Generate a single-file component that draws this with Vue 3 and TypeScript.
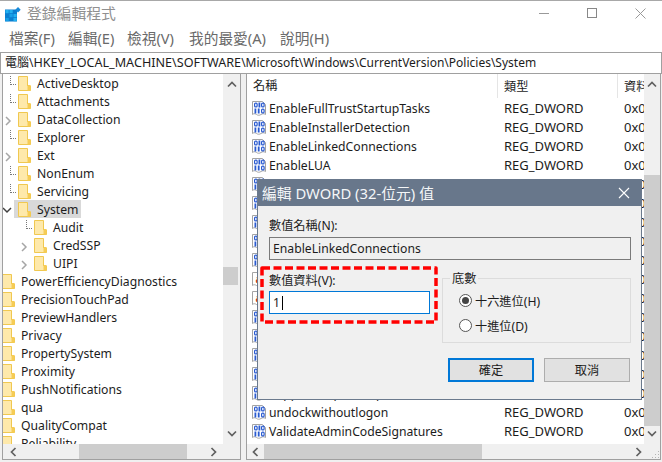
<script setup lang="ts">
interface TreeRow { name: string; depth: number; mark: 'line' | 'closed' | 'open' | 'none'; selected?: boolean }

const treeRows: TreeRow[] = [
  { name: 'ActiveDesktop', depth: 1, mark: 'line' },
  { name: 'Attachments', depth: 1, mark: 'line' },
  { name: 'DataCollection', depth: 1, mark: 'closed' },
  { name: 'Explorer', depth: 1, mark: 'line' },
  { name: 'Ext', depth: 1, mark: 'closed' },
  { name: 'NonEnum', depth: 1, mark: 'line' },
  { name: 'Servicing', depth: 1, mark: 'line' },
  { name: 'System', depth: 1, mark: 'open', selected: true },
  { name: 'Audit', depth: 2, mark: 'line' },
  { name: 'CredSSP', depth: 2, mark: 'closed' },
  { name: 'UIPI', depth: 2, mark: 'closed' },
  { name: 'PowerEfficiencyDiagnostics', depth: 0, mark: 'none' },
  { name: 'PrecisionTouchPad', depth: 0, mark: 'none' },
  { name: 'PreviewHandlers', depth: 0, mark: 'none' },
  { name: 'Privacy', depth: 0, mark: 'none' },
  { name: 'PropertySystem', depth: 0, mark: 'none' },
  { name: 'Proximity', depth: 0, mark: 'none' },
  { name: 'PushNotifications', depth: 0, mark: 'none' },
  { name: 'qua', depth: 0, mark: 'none' },
  { name: 'QualityCompat', depth: 0, mark: 'none' },
  { name: 'Reliability', depth: 0, mark: 'none' },
]

interface ListRow { name: string; text?: boolean }
const listRows: ListRow[] = [
  { name: 'EnableFullTrustStartupTasks' },
  { name: 'EnableInstallerDetection' },
  { name: 'EnableLinkedConnections' },
  { name: 'EnableLUA' },
  { name: 'EnableSecureUIAPaths' },
  { name: 'EnableUIADesktopToggle' },
  { name: 'EnableUwpStartupTasks' },
  { name: 'EnableVirtualization' },
  { name: 'FilterAdministratorToken' },
  { name: 'legalnoticecaption', text: true },
  { name: 'legalnoticetext', text: true },
  { name: 'PromptOnSecureDesktop' },
  { name: 'scforceoption' },
  { name: 'shutdownwithoutlogon' },
  { name: 'SupportFullTrustStartupTasks' },
  { name: 'SupportUwpStartupTasks' },
  { name: 'undockwithoutlogon' },
  { name: 'ValidateAdminCodeSignatures' },
]
</script>

<template>
  <div class="window">
    <header class="titlebar">
      <svg class="app-icon" width="16" height="15" viewBox="0 0 16 15">
        <rect x="0" y="2.500" width="12" height="12" fill="#0a7fd0" />
        <rect x="0.500" y="3" width="3.200" height="3.200" fill="#22b0f0" />
        <rect x="4.500" y="3" width="3.200" height="3.200" fill="#22b0f0" />
        <rect x="8.500" y="7" width="3.200" height="3.200" fill="#22b0f0" />
        <rect x="4.500" y="7" width="3.200" height="3.200" fill="#16a0e8" />
        <rect x="0.500" y="11" width="3.200" height="3.200" fill="#16a0e8" />
        <rect x="8.500" y="11" width="3.200" height="3.200" fill="#22b0f0" />
        <path d="M13 0l2.700 2.700L13 5.400l-2.700-2.700z" fill="#1689d8" />
      </svg>
      <span class="title">登錄編輯程式</span>
      <div class="win-controls">
        <svg width="11" height="11" viewBox="0 0 11 11"><path d="M0 5.500h10" stroke="#999" fill="none" /></svg>
        <svg width="11" height="11" viewBox="0 0 11 11"><rect x="0.500" y="0.500" width="9" height="9" stroke="#888" fill="none" /></svg>
        <svg width="11" height="11" viewBox="0 0 11 11"><path d="M.5.500l10 10M10.500.500l-10 10" stroke="#999" fill="none" /></svg>
      </div>
    </header>

    <nav class="menubar">
      <span class="m1">檔案(F)</span>
      <span class="m2">編輯(E)</span>
      <span class="m3">檢視(V)</span>
      <span class="m4">我的最愛(A)</span>
      <span>說明(H)</span>
    </nav>

    <div class="address">電腦\<span class="caps">HKEY_LOCAL_MACHINE\SOFTWARE</span>\Microsoft\Windows\CurrentVersion\Policies\System</div>

    <main class="panes">
      <section class="pane tree-pane">
        <div class="pane-body">
          <div class="pane-content tree">
            <div v-for="row in treeRows" :key="row.name" class="tree-row" :class="'depth-' + row.depth">
              <span class="mark">
                <span v-if="row.mark === 'line'" class="dots" />
                <svg v-else-if="row.mark === 'closed'" class="chev-r" width="8" height="10" viewBox="0 0 8 10"><path d="M2 1l4 4-4 4" stroke="#a6a6a6" stroke-width="1.500" fill="none" /></svg>
                <svg v-else-if="row.mark === 'open'" class="chev-d" width="10" height="8" viewBox="0 0 10 8"><path d="M1 2l4 4 4-4" stroke="#404040" stroke-width="1.500" fill="none" /></svg>
              </span>
              <span class="tree-item" :class="{ selected: row.selected }">
                <svg class="folder" width="13" height="15" viewBox="0 0 13 15">
                  <path d="M.5.500h9l0 9.500h3V14.500H.5z" fill="#fde38f" stroke="#f0c850" />
                  <path d="M1 1h8v9h3v4H1z" fill="#fee9ab" />
                  <path d="M9.500 9v5.500H12.500V9z" fill="#f6cc55" />
                </svg>
                <span class="tree-label">{{ row.name }}</span>
              </span>
            </div>
          </div>
          <div class="vscroll">
            <svg class="arrow" width="10" height="7" viewBox="0 0 10 7"><path d="M1 5.500l4-4 4 4" stroke="#606060" stroke-width="1.700" fill="none" /></svg>
            <span class="vthumb tree-vthumb" />
            <svg class="arrow" width="10" height="7" viewBox="0 0 10 7"><path d="M1 1.500l4 4 4-4" stroke="#606060" stroke-width="1.700" fill="none" /></svg>
          </div>
        </div>
        <div class="hscroll tree-h">
          <svg width="7" height="10" viewBox="0 0 7 10"><path d="M5.500 1l-4 4 4 4" stroke="#606060" stroke-width="1.700" fill="none" /></svg>
          <span class="hthumb" />
          <svg width="7" height="10" viewBox="0 0 7 10"><path d="M1.500 1l4 4-4 4" stroke="#606060" stroke-width="1.700" fill="none" /></svg>
        </div>
      </section>

      <section class="pane list-pane">
        <div class="pane-body">
          <div class="pane-content list">
            <div class="list-head">
              <span class="col-name">名稱</span>
              <span class="col-type">類型</span>
              <span class="col-data">資料</span>
            </div>
            <div v-for="row in listRows" :key="row.name" class="list-row">
              <span class="col-name">
                <svg class="reg-icon" width="16" height="16" viewBox="0 0 16 16">
                  <path d="M1.500 1.500h10l3 3v10c-1.500-1-3-1-4.500 0s-3 1-4.500 0-3-1-4 0z" fill="#fff" stroke="#a4a4a4" />
                  <template v-if="row.text">
                    <text x="4.500" y="11.500" class="sz">a</text>
                  </template>
                  <template v-else>
                    <rect x="3.600" y="3.100" width="2.500" height="3.800" rx="1" fill="none" stroke="#2a5bd0" stroke-width="1.200" />
                    <rect x="7.500" y="2.500" width="1.800" height="5" fill="#2a5bd0" />
                    <rect x="10.600" y="3.100" width="2.500" height="3.800" rx="1" fill="none" stroke="#2a5bd0" stroke-width="1.200" />
                    <rect x="3.500" y="8.500" width="1.800" height="5" fill="#2a5bd0" />
                    <rect x="6.800" y="8.500" width="1.800" height="5" fill="#2a5bd0" />
                    <rect x="10.600" y="9.100" width="2.500" height="3.800" rx="1" fill="none" stroke="#2a5bd0" stroke-width="1.200" />
                  </template>
                </svg>
                <span class="name-text">{{ row.name }}</span>
              </span>
              <span class="col-type">{{ row.text ? 'REG_SZ' : 'REG_DWORD' }}</span>
              <span class="col-data">0x00000001</span>
            </div>
          </div>
          <div class="vscroll list-v">
            <svg class="arrow" width="10" height="7" viewBox="0 0 10 7"><path d="M1 5.500l4-4 4 4" stroke="#606060" stroke-width="1.700" fill="none" /></svg>
            <span class="vthumb list-vthumb" />
            <svg class="arrow" width="10" height="7" viewBox="0 0 10 7"><path d="M1 1.500l4 4 4-4" stroke="#606060" stroke-width="1.700" fill="none" /></svg>
          </div>
        </div>
        <div class="hscroll list-h">
          <svg width="7" height="10" viewBox="0 0 7 10"><path d="M5.500 1l-4 4 4 4" stroke="#606060" stroke-width="1.700" fill="none" /></svg>
          <span class="hthumb" />
          <svg width="7" height="10" viewBox="0 0 7 10"><path d="M1.500 1l4 4-4 4" stroke="#606060" stroke-width="1.700" fill="none" /></svg>
          <svg class="grip" width="9" height="9" viewBox="0 0 9 9"><path d="M7 1h1v1H7zM4 4h1v1H4zM7 4h1v1H7zM1 7h1v1H1zM4 7h1v1H4zM7 7h1v1H7z" fill="#b4b4b4" /></svg>
        </div>
      </section>
    </main>

    <div class="dialog">
      <div class="dlg-title">
        <span>編輯 DWORD (32-位元) 值</span>
        <svg width="12" height="12" viewBox="0 0 12 12"><path d="M1 1l10 10M11 1L1 11" stroke="#fff" stroke-width="1.100" fill="none" /></svg>
      </div>
      <div class="dlg-body">
        <label class="dlg-label">數值名稱(N):</label>
        <div class="name-field">EnableLinkedConnections</div>
        <div class="dlg-row">
          <div class="value-box">
            <label class="dlg-label">數值資料(V):</label>
            <div class="value-field">1<span class="caret" /></div>
            <svg class="red-dash" width="178" height="58" viewBox="0 0 178 58">
              <rect x="2" y="2" width="174" height="54" fill="none" stroke="#f00" stroke-width="3.500" stroke-dasharray="8 3.500" stroke-linejoin="round" />
            </svg>
          </div>
          <fieldset class="base">
            <legend>底數</legend>
            <div class="radio-row">
              <span class="radio on"><i /></span>十六進位(H)
            </div>
            <div class="radio-row">
              <span class="radio" />十進位(D)
            </div>
          </fieldset>
        </div>
        <div class="buttons">
          <button class="btn primary">確定</button>
          <button class="btn">取消</button>
        </div>
      </div>
    </div>
  </div>
</template>

<style>
body { margin: 0; }
</style>

<style scoped>
.window {
  position: relative;
  width: 662px;
  height: 462px;
  overflow: hidden;
  display: flex;
  flex-direction: column;
  background: #f0f0f0;
  font-family: "Noto Sans", "Noto Sans CJK TC", sans-serif;
  color: #1c1c1c;
  font-size: 12.2px;
}
.titlebar {
  height: 28px;
  flex: none;
  background: #fff;
  border-top: 1px solid #a8a8a8;
  box-sizing: border-box;
  display: flex;
  align-items: center;
  padding: 0 0 5px 5px;
}
.app-icon { margin-top: 5px; }
.title {
  margin-left: 6px;
  font-size: 14.8px;
  color: #909090;
}
.win-controls {
  margin-left: auto;
  display: flex;
  gap: 37px;
  padding: 3px 16px 0 0;
}
.menubar {
  height: 24px;
  flex: none;
  background: #fff;
  display: flex;
  align-items: center;
  padding: 0 0 6px 9px;
  box-sizing: border-box;
  font-size: 14.7px;
  color: #6a6a6a;
}
.m1 { width: 59px; }
.m2 { width: 59px; }
.m3 { width: 62px; }
.m4 { width: 91px; }
.address {
  height: 22px;
  flex: none;
  box-sizing: border-box;
  background: #fff;
  border: 1px solid #a0a0a0;
  padding-left: 4px;
  line-height: 19px;
  font-size: 12px;
  white-space: nowrap;
}
.caps { font-size: 12.6px; }
.panes {
  flex: none;
  height: 386px;
  display: flex;
  padding-left: 2px;
  gap: 5px;
}
.pane {
  box-sizing: border-box;
  height: 386px;
  border: 1px solid #a0a0a0;
  border-top: none;
  display: flex;
  flex-direction: column;
  background: #fff;
  overflow: hidden;
}
.tree-pane { width: 239px; }
.list-pane { width: 415px; }
.pane-body {
  flex: 1;
  min-height: 0;
  display: flex;
}
.pane-content {
  flex: 1;
  min-width: 0;
  overflow: hidden;
}
.tree-row {
  height: 18px;
  display: flex;
  align-items: center;
}
.depth-2 { padding-left: 16px; }
.mark {
  width: 15px;
  height: 18px;
  flex: none;
  display: flex;
  align-items: center;
}
.depth-0 .mark { display: none; }
.depth-0 .tree-item { margin-left: -1px; }
.dots {
  position: relative;
  display: block;
  width: 6px;
  margin: 2px 0 0 7px;
  border-top: 1px dotted #777;
}
.dots::before {
  content: "";
  position: absolute;
  left: 0;
  top: -9px;
  height: 9px;
  border-left: 1px dotted #777;
}
.chev-r { margin: 4px 0 0 1px; }
.chev-d { margin: 2px 0 0 -1px; }
.tree-item {
  display: flex;
  align-items: center;
  gap: 6px;
  height: 18px;
  padding-right: 3px;
}
.tree-item.selected { background: #d9d9d9; margin-left: -4px; padding-left: 4px; }
.folder { flex: none; }
.tree-label { white-space: nowrap; }
.vscroll {
  width: 17px;
  flex: none;
  background: #f0f0f0;
  position: relative;
  display: flex;
  flex-direction: column;
  align-items: center;
  justify-content: space-between;
  padding: 7px 0;
  box-sizing: border-box;
}
.vthumb {
  position: absolute;
  left: 0;
  width: 15px;
  background: #cdcdcd;
}
.tree-vthumb { top: 193px; height: 18px; }
.list-v { width: 16px; }
.list-vthumb { top: 101px; height: 251px; width: 16px; }
.hscroll {
  height: 15px;
  flex: none;
  background: #f0f0f0;
  display: flex;
  align-items: center;
  position: relative;
}
.tree-h { justify-content: space-between; padding: 0 23px 0 7px; }
.hthumb {
  position: absolute;
  background: #cdcdcd;
  top: 0;
  bottom: 0;
}
.tree-h .hthumb { left: 76px; width: 108px; }
.list-h { padding-left: 5px; justify-content: flex-start; }
.list-h > svg:nth-of-type(2) { margin-left: auto; margin-right: 18px; }
.list-h .hthumb { left: 17px; width: 218px; }
.grip { position: absolute; right: 0; bottom: 0; }
.list-head {
  height: 24px;
  display: flex;
  align-items: center;
}
.list-head .col-name, .list-head .col-type { border-right: 1px solid #e5e5e5; }
.list-head span { height: 24px; line-height: 26px; box-sizing: border-box; }
.list-head .col-name { padding-left: 6px; }
.list-row {
  height: 19px;
  display: flex;
  align-items: center;
}
.col-name {
  width: 251px;
  flex: none;
  display: flex;
  align-items: center;
  gap: 2px;
  padding-left: 4px;
  box-sizing: border-box;
  white-space: nowrap;
  overflow: hidden;
}
.name-text { padding-top: 2px; }
.col-type {
  width: 120px;
  flex: none;
  padding-left: 6px;
  box-sizing: border-box;
  white-space: nowrap;
}
.list-row .col-type, .list-row .col-data { font-size: 13px; }
.col-data {
  flex: 1;
  min-width: 0;
  padding-left: 6px;
  white-space: nowrap;
  overflow: hidden;
}
.reg-icon { flex: none; }
.sz { font-size: 10px; fill: #d03020; font-weight: 700; }

.dialog {
  position: absolute;
  left: 257px;
  top: 179px;
  width: 385px;
  height: 221px;
  background: #f0f0f0;
  border: 1px solid #6b7a8d;
  border-top: none;
  box-sizing: border-box;
  display: flex;
  flex-direction: column;
}
.dlg-title {
  height: 27px;
  flex: none;
  background: #68778b;
  color: #f4f6f8;
  font-size: 14.8px;
  display: flex;
  align-items: center;
  justify-content: space-between;
  padding: 0 11px 0 4px;
}
.dlg-body {
  flex: 1;
  padding: 10px 10px 0 11px;
  display: flex;
  flex-direction: column;
}
.dlg-label { display: block; line-height: 19px; }
.name-field {
  margin-top: 2px;
  height: 23px;
  box-sizing: border-box;
  border: 1px solid #7a7a7a;
  line-height: 22px;
  padding-left: 3px;
  width: 362px;
}
.dlg-row {
  display: flex;
  align-items: flex-start;
  margin-top: 12px;
}
.value-box {
  width: 161px;
  margin-top: -1px;
  position: relative;
}
.red-dash {
  position: absolute;
  left: -9px;
  top: -5px;
  pointer-events: none;
}
.value-field {
  margin-top: 1px;
  height: 23px;
  box-sizing: border-box;
  border: 1px solid #0078d7;
  background: #fff;
  line-height: 20px;
  padding-left: 3px;
  display: flex;
  align-items: center;
}
.caret {
  width: 1px;
  height: 14px;
  background: #000;
  margin-left: 2px;
}
.base {
  margin: -1px 0 0 12px;
  width: 189px;
  height: 72px;
  box-sizing: border-box;
  border: 1px solid #dcdcdc;
  padding: 2px 0 0 16px;
}
.base legend {
  padding: 0 2px;
  margin-left: -9px;
  line-height: 15px;
}
.radio-row {
  display: flex;
  align-items: center;
  height: 25px;
  gap: 3px;
}
.radio {
  width: 13px;
  height: 13px;
  border-radius: 50%;
  border: 1px solid #555;
  background: #fff;
  display: flex;
  align-items: center;
  justify-content: center;
  flex: none;
  box-sizing: border-box;
}
.radio i {
  width: 7px;
  height: 7px;
  border-radius: 50%;
  background: #444;
}
.buttons {
  display: flex;
  justify-content: flex-end;
  gap: 10px;
  margin-top: 15px;
  padding-right: 1px;
}
.btn {
  width: 86px;
  height: 24px;
  box-sizing: border-box;
  background: #e1e1e1;
  border: 1px solid #adadad;
  font: inherit;
  color: inherit;
  padding: 0;
}
.btn.primary { border: 2px solid #0078d7; }
</style>
